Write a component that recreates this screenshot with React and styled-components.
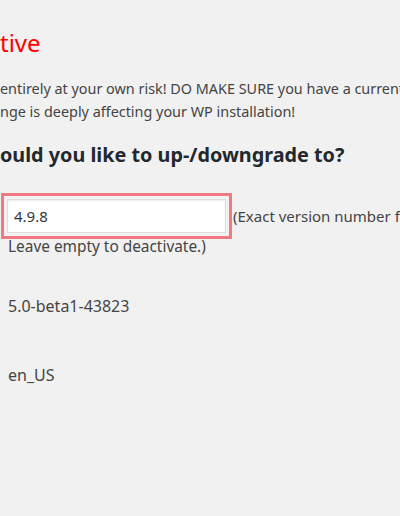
import React from "react";
import styled, { createGlobalStyle } from "styled-components";

const Global = createGlobalStyle`
  html, body { margin: 0; padding: 0; background: #f1f1f1; }
  body { overflow: hidden; width: 400px; height: 516px; }
`;

const Page = styled.div`
  width: 400px;
  height: 516px;
  overflow: hidden;
  background: #f1f1f1;
  font-family: "Noto Sans", "Open Sans", sans-serif;
  color: #444;
  white-space: nowrap;
  display: flex;
  flex-direction: column;
  padding-top: 28px;
  box-sizing: border-box;
`;

const Title = styled.h1`
  margin: 0;
  font-size: 24px;
  line-height: 29px;
  font-weight: 400;
  color: #ff0000;
`;

const Notice = styled.p`
  margin: 20px 0 0;
  font-size: 14.4px;
  line-height: 23px;
`;

const Line = styled.span`
  display: block;
`;

const Heading = styled.h2`
  margin: 20px 0 0;
  font-size: 19.8px;
  line-height: 24px;
  font-weight: 700;
  color: #23282d;
`;

const FieldRow = styled.div`
  margin-top: 26px;
  display: flex;
  align-items: center;
`;

const Highlight = styled.div`
  margin-left: 1px;
  border: 3px solid rgba(240, 80, 90, 0.75);
  padding: 3px;
  display: flex;
`;

const Input = styled.input`
  width: 219px;
  height: 34px;
  box-sizing: border-box;
  border: 1px solid #ddd;
  box-shadow: inset 0 1px 2px rgba(0, 0, 0, 0.07);
  background: #fff;
  padding: 0 6px;
  font-family: inherit;
  font-size: 15px;
  color: #32373c;
  outline: none;
`;

const Inline = styled.span`
  margin-left: 1px;
  font-size: 15px;
  line-height: 23px;
`;

const Description = styled.div`
  margin-top: -2px;
  padding-left: 8px;
  font-size: 15.4px;
  line-height: 20px;
`;

const Value = styled.div`
  padding-left: 8px;
  font-size: 16px;
  line-height: 20px;
  margin-top: ${(p) => p.$gap}px;
`;

export default function App() {
  return (
    <Page>
      <Global />
      <Title>tive</Title>
      <Notice>
        <Line>entirely at your own risk! DO MAKE SURE you have a current backup</Line>
        <Line>nge is deeply affecting your WP installation!</Line>
      </Notice>
      <Heading>ould you like to up-/downgrade to?</Heading>
      <FieldRow>
        <Highlight>
          <Input defaultValue="4.9.8" />
        </Highlight>
        <Inline>(Exact version number for the core to switch to.</Inline>
      </FieldRow>
      <Description>Leave empty to deactivate.)</Description>
      <Value $gap={39}>5.0-beta1-43823</Value>
      <Value $gap={49}>en_US</Value>
    </Page>
  );
}
